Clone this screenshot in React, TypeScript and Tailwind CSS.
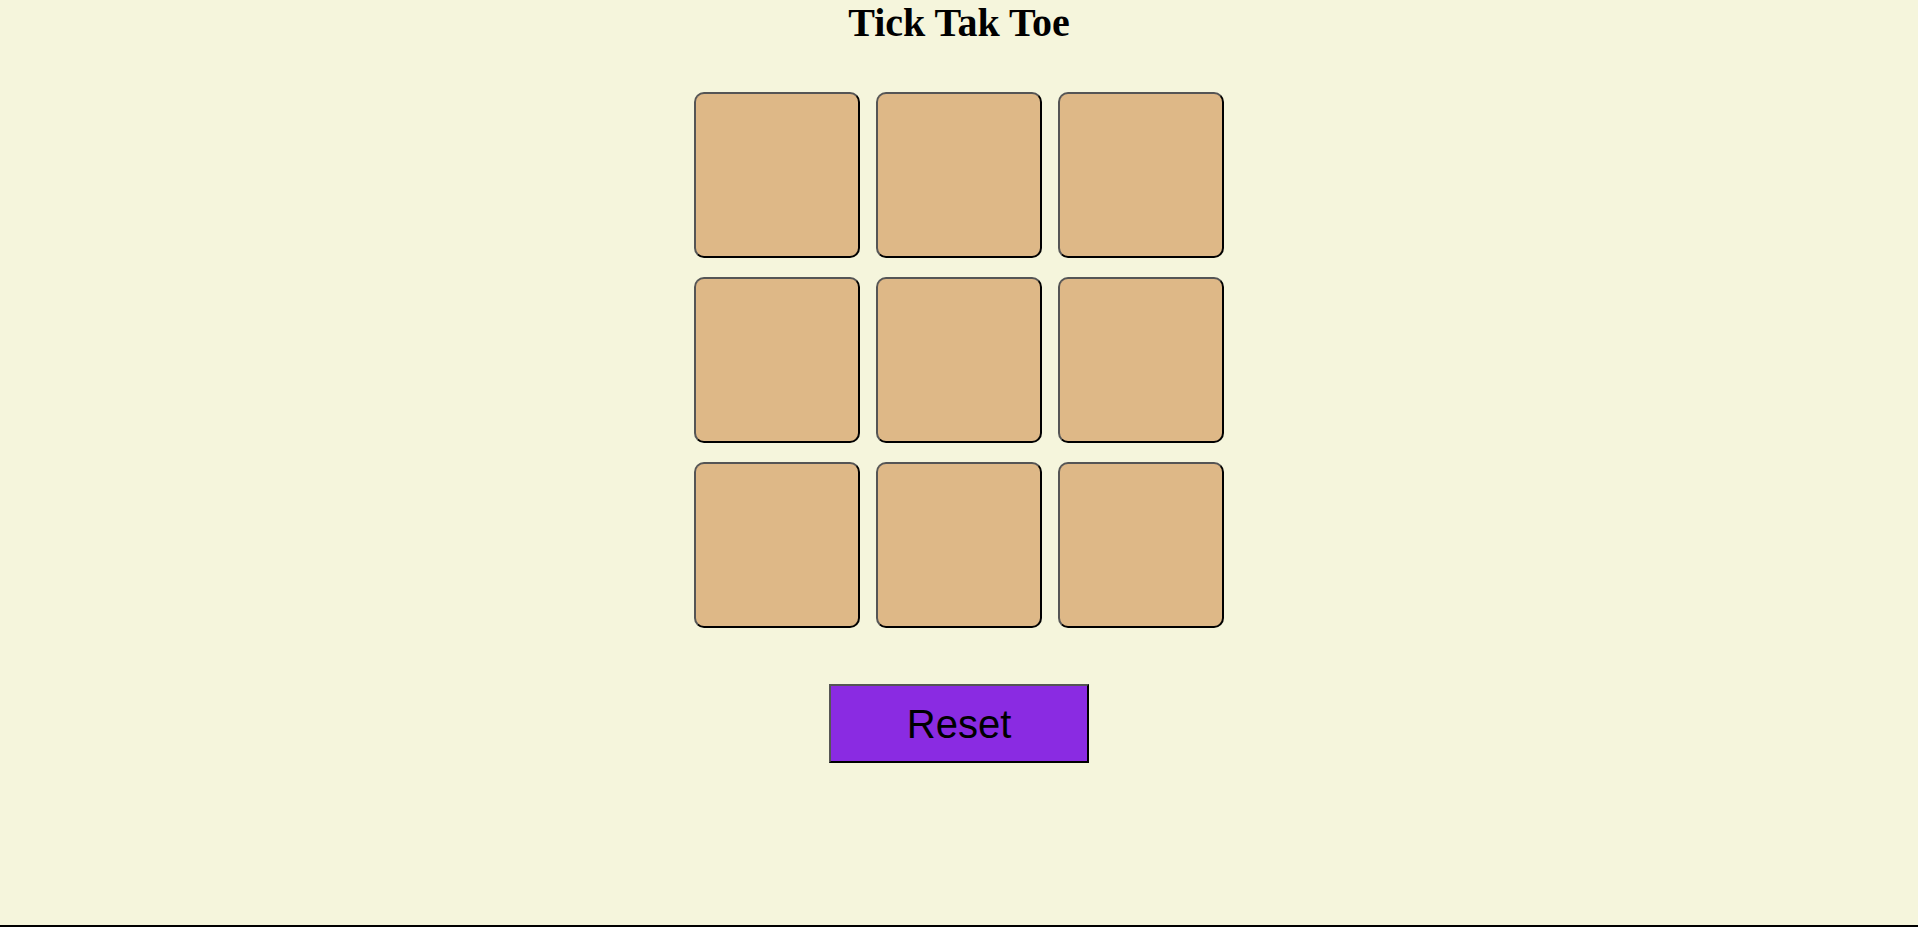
import React, { useState } from 'react';

const cellClass =
  'w-[166px] h-[166px] rounded-[10px] bg-[#deb887] border-2 border-solid border-t-[#555555] border-l-[#555555] border-b-black border-r-black text-[64px] font-bold text-black flex items-center justify-center';

export default function App() {
  const [cells, setCells] = useState<string[]>(Array(9).fill(''));
  const [turn, setTurn] = useState<'X' | 'O'>('X');

  const play = (i: number) => {
    if (cells[i]) return;
    const next = [...cells];
    next[i] = turn;
    setCells(next);
    setTurn(turn === 'X' ? 'O' : 'X');
  };

  const reset = () => {
    setCells(Array(9).fill(''));
    setTurn('X');
  };

  return (
    <div className="h-[927px] bg-[#f5f5dc] border-b-2 border-black flex flex-col items-center">
      <h1 className="text-[40px] leading-[46px] font-bold text-black [font-family:'Liberation_Serif',serif]">
        Tick Tak Toe
      </h1>
      <div className="mt-[46px] grid grid-cols-3 gap-x-[16px] gap-y-[19px]">
        {cells.map((c, i) => (
          <button key={i} type="button" onClick={() => play(i)} className={cellClass}>
            {c}
          </button>
        ))}
      </div>
      <button
        type="button"
        onClick={reset}
        className="mt-[56px] w-[260px] h-[79px] bg-[#8a2be2] text-black text-[40px] border-2 border-solid border-t-[#555555] border-l-[#555555] border-b-black border-r-black [font-family:'Liberation_Sans',Arial,sans-serif]"
      >
        Reset
      </button>
    </div>
  );
}
